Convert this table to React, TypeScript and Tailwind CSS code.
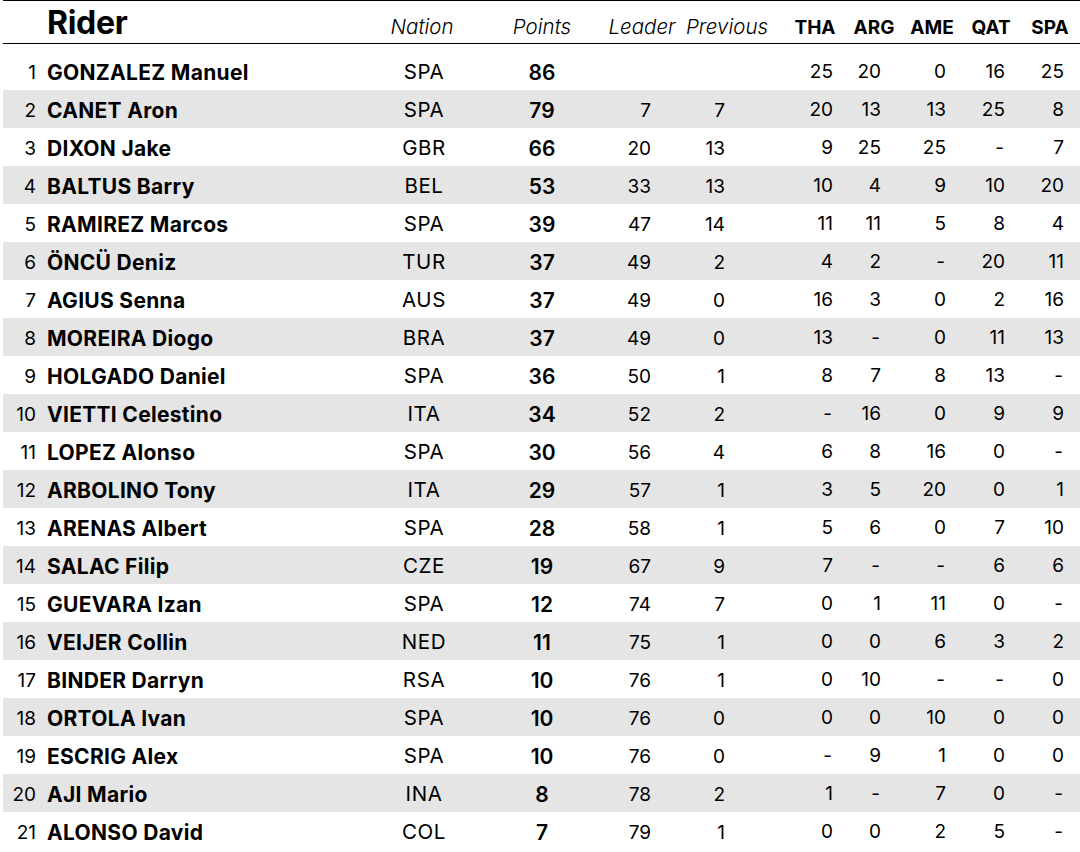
type Row = {
  pos: number;
  last: string;
  first: string;
  nation: string;
  points: number;
  leader: string;
  previous: string;
  races: string[];
};

const rows: Row[] = [
  { pos: 1, last: "GONZALEZ", first: "Manuel", nation: "SPA", points: 86, leader: "", previous: "", races: ["25", "20", "0", "16", "25"] },
  { pos: 2, last: "CANET", first: "Aron", nation: "SPA", points: 79, leader: "7", previous: "7", races: ["20", "13", "13", "25", "8"] },
  { pos: 3, last: "DIXON", first: "Jake", nation: "GBR", points: 66, leader: "20", previous: "13", races: ["9", "25", "25", "-", "7"] },
  { pos: 4, last: "BALTUS", first: "Barry", nation: "BEL", points: 53, leader: "33", previous: "13", races: ["10", "4", "9", "10", "20"] },
  { pos: 5, last: "RAMIREZ", first: "Marcos", nation: "SPA", points: 39, leader: "47", previous: "14", races: ["11", "11", "5", "8", "4"] },
  { pos: 6, last: "ÖNCÜ", first: "Deniz", nation: "TUR", points: 37, leader: "49", previous: "2", races: ["4", "2", "-", "20", "11"] },
  { pos: 7, last: "AGIUS", first: "Senna", nation: "AUS", points: 37, leader: "49", previous: "0", races: ["16", "3", "0", "2", "16"] },
  { pos: 8, last: "MOREIRA", first: "Diogo", nation: "BRA", points: 37, leader: "49", previous: "0", races: ["13", "-", "0", "11", "13"] },
  { pos: 9, last: "HOLGADO", first: "Daniel", nation: "SPA", points: 36, leader: "50", previous: "1", races: ["8", "7", "8", "13", "-"] },
  { pos: 10, last: "VIETTI", first: "Celestino", nation: "ITA", points: 34, leader: "52", previous: "2", races: ["-", "16", "0", "9", "9"] },
  { pos: 11, last: "LOPEZ", first: "Alonso", nation: "SPA", points: 30, leader: "56", previous: "4", races: ["6", "8", "16", "0", "-"] },
  { pos: 12, last: "ARBOLINO", first: "Tony", nation: "ITA", points: 29, leader: "57", previous: "1", races: ["3", "5", "20", "0", "1"] },
  { pos: 13, last: "ARENAS", first: "Albert", nation: "SPA", points: 28, leader: "58", previous: "1", races: ["5", "6", "0", "7", "10"] },
  { pos: 14, last: "SALAC", first: "Filip", nation: "CZE", points: 19, leader: "67", previous: "9", races: ["7", "-", "-", "6", "6"] },
  { pos: 15, last: "GUEVARA", first: "Izan", nation: "SPA", points: 12, leader: "74", previous: "7", races: ["0", "1", "11", "0", "-"] },
  { pos: 16, last: "VEIJER", first: "Collin", nation: "NED", points: 11, leader: "75", previous: "1", races: ["0", "0", "6", "3", "2"] },
  { pos: 17, last: "BINDER", first: "Darryn", nation: "RSA", points: 10, leader: "76", previous: "1", races: ["0", "10", "-", "-", "0"] },
  { pos: 18, last: "ORTOLA", first: "Ivan", nation: "SPA", points: 10, leader: "76", previous: "0", races: ["0", "0", "10", "0", "0"] },
  { pos: 19, last: "ESCRIG", first: "Alex", nation: "SPA", points: 10, leader: "76", previous: "0", races: ["-", "9", "1", "0", "0"] },
  { pos: 20, last: "AJI", first: "Mario", nation: "INA", points: 8, leader: "78", previous: "2", races: ["1", "-", "7", "0", "-"] },
  { pos: 21, last: "ALONSO", first: "David", nation: "COL", points: 7, leader: "79", previous: "1", races: ["0", "0", "2", "5", "-"] },
];

const rowGrid =
  "grid grid-cols-[37px_340px_88px_148px_44px_75px_108px_48px_65px_59px_59px] items-center";
const headGrid =
  "grid grid-cols-[377px_84px_156px_44px_126px_50px_68px_48px_70px_48px] items-end";

function Val({ v }: { v: string }) {
  // dashes sit in the middle of a digit's width
  if (v === "-") return <span className="inline-block w-[11px] text-center">-</span>;
  return <span>{v}</span>;
}

export default function App() {
  return (
    <div className="w-[1080px] h-[852px] bg-white text-black overflow-hidden font-['Inter','Noto_Sans',sans-serif]">
      <div className="ml-[3px] border-t border-black" />
      <div className={`${headGrid} ml-[3px] h-[43px] pb-[6px] border-b border-black`}>
        <div className="pl-[44px] text-[32px] font-bold leading-none tracking-[-0.3px] translate-y-[2px]">Rider</div>
        {["Nation", "Points", "Leader", "Previous"].map((h) => (
          <div key={h} className="flex justify-center whitespace-nowrap text-[20.5px] italic font-light leading-none">
            {h}
          </div>
        ))}
        {["THA", "ARG", "AME", "QAT", "SPA"].map((h) => (
          <div key={h} className="flex justify-center whitespace-nowrap text-[19px] font-bold leading-none">
            {h}
          </div>
        ))}
      </div>
      <div className="mt-[8px] pl-[3px]">
        {rows.map((r, i) => (
          <div
            key={r.pos}
            className={`${rowGrid} h-[38px] text-[19px] leading-none ${i % 2 === 1 ? "bg-[#e5e5e5]" : ""}`}
          >
            <div className="text-right pr-[4px] translate-y-[1px]">{r.pos}</div>
            <div className="pl-[7px] text-[21px] font-bold whitespace-nowrap tracking-[0.3px] translate-y-[1px]">
              {r.last} {r.first}
            </div>
            <div className="text-center text-[20.5px] tracking-[0.6px] translate-y-[1px]">{r.nation}</div>
            <div className="text-center text-[21px] font-semibold translate-y-[1px]">{r.points}</div>
            <div className="text-right pr-[9px] translate-y-[1px]">{r.leader}</div>
            <div className="text-right pr-[10px] translate-y-[1px]">{r.previous}</div>
            {r.races.map((v, j) => (
              <div key={j} className="text-right pr-[10px]">
                <Val v={v} />
              </div>
            ))}
          </div>
        ))}
      </div>
    </div>
  );
}
